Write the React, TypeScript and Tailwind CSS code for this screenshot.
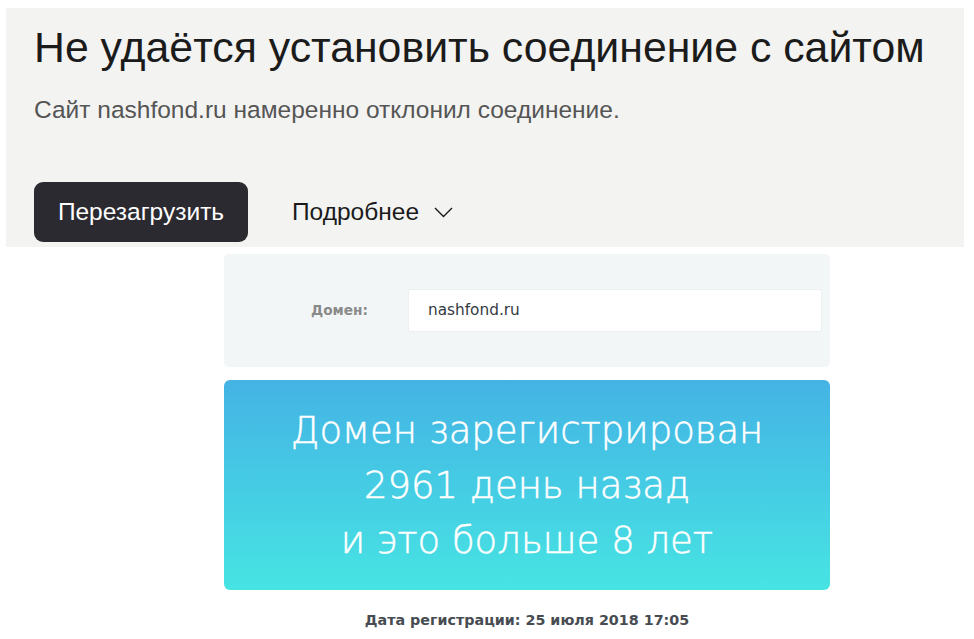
export default function App() {
  return (
    <div className="w-[974px] h-[639px] overflow-hidden bg-white">
      <section
        className="ml-[6px] mt-[8px] h-[239px] w-[958px] bg-[#f3f3f2] pl-[28px] pt-[18px]"
        style={{ fontFamily: '"Liberation Sans", Arial, sans-serif' }}
      >
        <h1 className="text-[42.8px] leading-none text-[#1b1b1b]">
          Не удаётся установить соединение с сайтом
        </h1>
        <p className="mt-[29px] text-[24.5px] leading-none text-[#555555]">
          Сайт nashfond.ru намеренно отклонил соединение.
        </p>
        <div className="mt-[60px] flex items-center">
          <button className="h-[60px] w-[214px] rounded-[9px] bg-[#2b2a30] text-[24.5px] text-white">
            Перезагрузить
          </button>
          <button className="ml-[44px] flex items-center gap-[15px] text-[24.5px] text-[#1b1b1b]">
            Подробнее
            <svg width="19" height="11" viewBox="0 0 19 11" fill="none">
              <polyline points="1,1 9.5,9.5 18,1" stroke="#1b1b1b" strokeWidth="1.4" />
            </svg>
          </button>
        </div>
      </section>

      <div
        className="ml-[224px] w-[606px]"
        style={{ fontFamily: '"DejaVu Sans", "Open Sans", sans-serif' }}
      >
        <div className="mt-[7px] flex h-[113px] items-center rounded-[5px] bg-[#f3f6f7] pr-[8px]">
          <span className="w-[144px] text-right text-[13.7px] font-bold text-[#8a8a8a]">
            Домен:
          </span>
          <div className="ml-[40px] flex h-[43px] w-[414px] items-center rounded-[2px] border border-[#edf0f1] bg-white pl-[19px] text-[15.3px] text-[#333a40]">
            nashfond.ru
          </div>
        </div>

        <div className="mt-[13px] flex h-[210px] flex-col items-center justify-center rounded-[6px] bg-gradient-to-b from-[#44b3e4] to-[#47e4e3] text-center text-[37px] font-extralight leading-[55px] text-white [-webkit-text-stroke:0.5px_white]">
          <div>Домен зарегистрирован</div>
          <div>2961 день назад</div>
          <div>и это больше 8 лет</div>
        </div>

        <p className="mt-[20px] text-center text-[14.3px] font-bold text-[#474c52]">
          Дата регистрации: 25 июля 2018 17:05
        </p>
      </div>
    </div>
  );
}
